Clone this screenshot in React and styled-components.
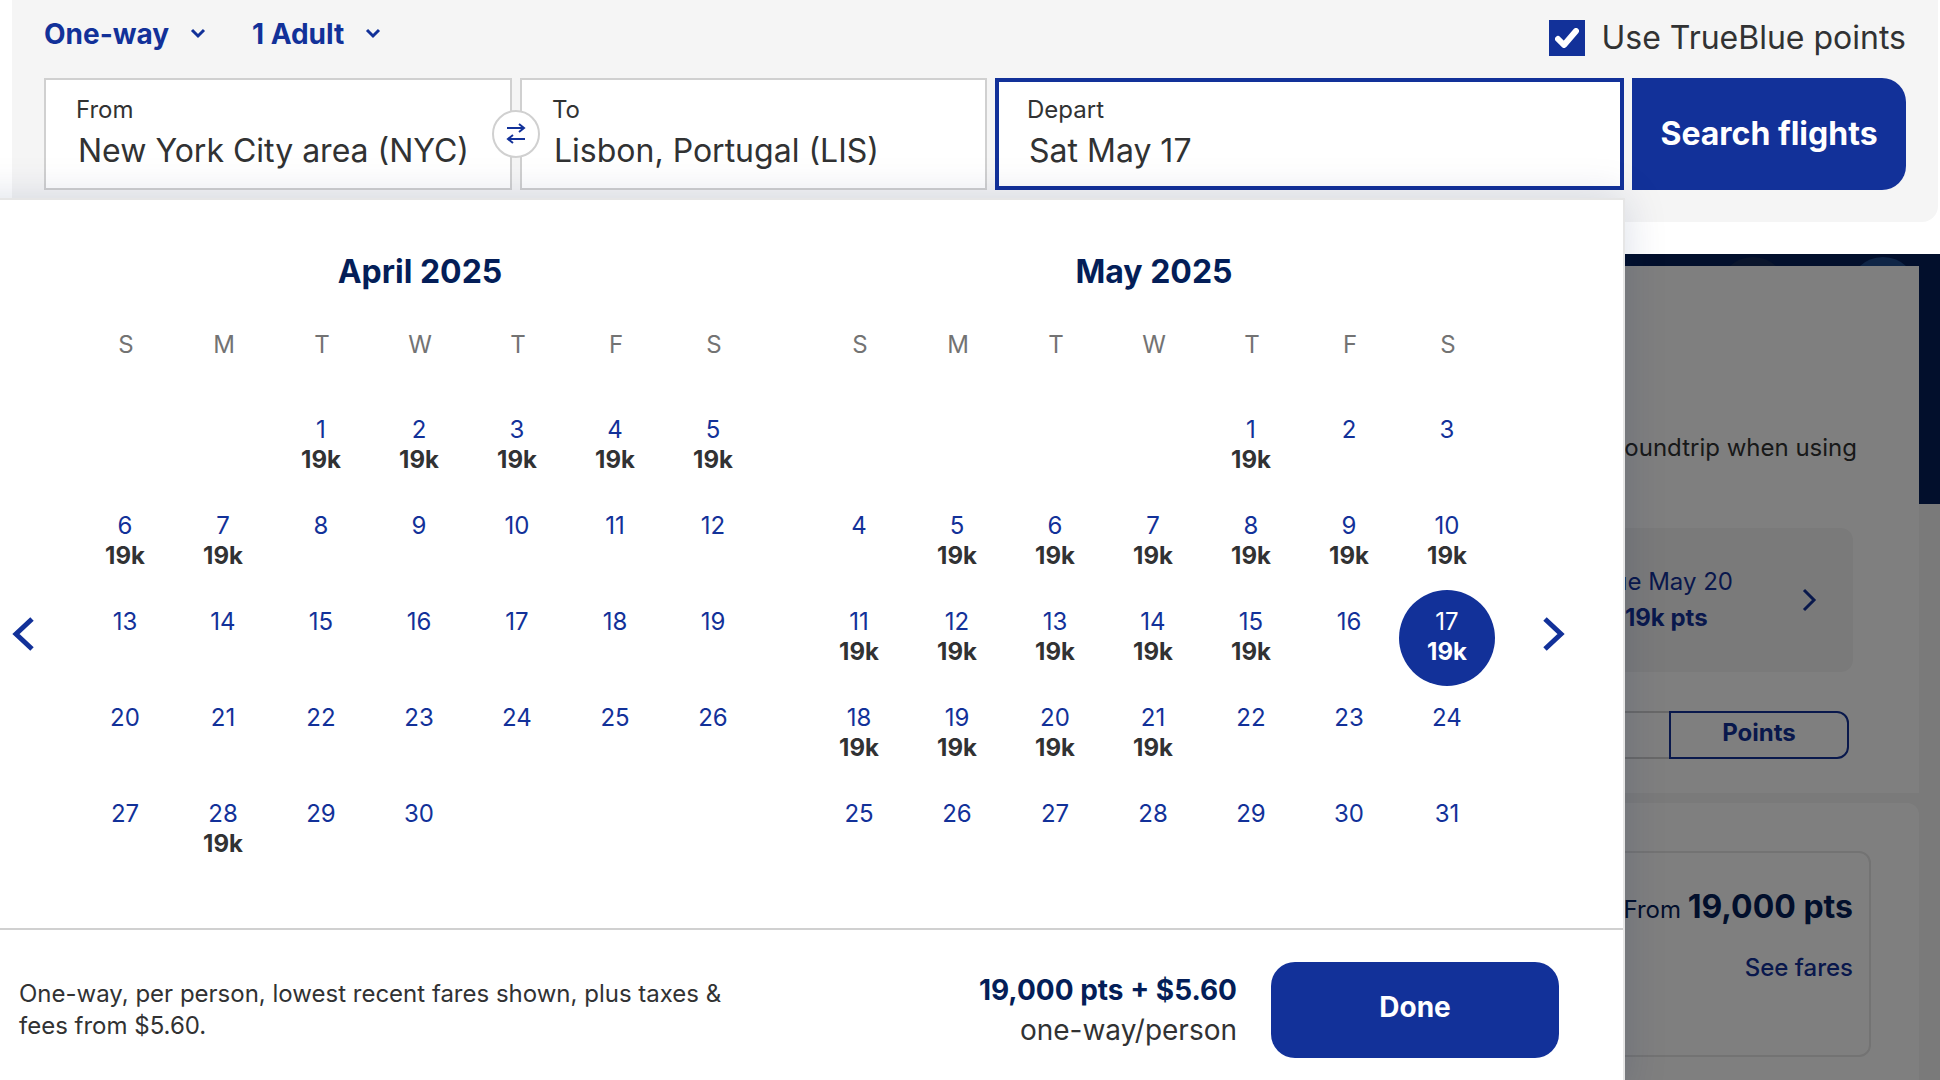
import React, { useState } from 'react';
import styled, { createGlobalStyle, css } from 'styled-components';

const blue = '#123199';
const navy = '#041e58';
const ink = '#313233';
const line = '#d0d0d0';

const GlobalStyle = createGlobalStyle`
  *,
  *::before,
  *::after {
    box-sizing: border-box;
  }

  body {
    margin: 0;
    background: #fff;
    color: ${ink};
    font-family: Inter, 'Liberation Sans', sans-serif;
    font-size: 24px;
    line-height: 32px;
  }

  button,
  input,
  select {
    font: inherit;
    color: inherit;
    border: 0;
    padding: 0;
    margin: 0;
    background: none;
  }

  button {
    cursor: pointer;
  }
`;

const Page = styled.div`
  display: flex;
  flex-direction: column;
  min-height: 100vh;
  position: relative;
  overflow: hidden;
`;

/* Search bar */

const SearchPanel = styled.form`
  position: relative;
  z-index: 2;
  margin: 0 2px 32px 12px;
  padding: 14px 32px 32px;
  background: #f5f5f5;
  border-radius: 0 0 16px 0;
`;

const Options = styled.div`
  display: flex;
  align-items: center;
  gap: 46px;
  height: 48px;
  margin-bottom: 16px;
`;

const SelectWrap = styled.label`
  display: flex;
  align-items: center;
  gap: 20px;
  height: 40px;
  margin-bottom: 8px;
  color: ${blue};
`;

const Select = styled.select`
  appearance: none;
  font-size: 28px;
  font-weight: 700;
  line-height: 40px;
`;

const PointsLabel = styled.label`
  display: flex;
  align-items: center;
  gap: 16px;
  margin-left: auto;
  font-size: 32px;
  line-height: 40px;
`;

const CheckWrap = styled.span`
  display: grid;
  width: 36px;
  height: 36px;

  & > * {
    grid-area: 1 / 1;
  }

  svg {
    place-self: center;
    pointer-events: none;
  }
`;

const Checkbox = styled.input`
  appearance: none;
  width: 36px;
  height: 36px;
  border: 2px solid ${blue};
  background: #fff;

  &:checked {
    background: ${blue};
  }
`;

const Fields = styled.div`
  display: grid;
  grid-template-columns: 468fr 467fr 629fr 274px;
  gap: 8px;
`;

const Field = styled.div`
  position: relative;
  display: flex;
  flex-direction: column;
  height: 112px;
  padding: ${props => (props.$active ? '12px 28px' : '14px 30px')};
  border: ${props => (props.$active ? `4px solid ${blue}` : `2px solid ${line}`)};
  background: #fff;
`;

const FieldLabel = styled.label`
  font-size: 24px;
  line-height: 32px;
`;

const FieldInput = styled.input`
  width: 100%;
  height: 50px;
  padding-left: 2px;
  font-size: 32px;
  line-height: 48px;
  outline: none;
`;

const SwapButton = styled.button`
  position: absolute;
  z-index: 1;
  top: 30px;
  right: -30px;
  display: grid;
  place-items: center;
  width: 48px;
  height: 48px;
  border: 2px solid ${line};
  border-radius: 50%;
  background: #fff;
`;

const PrimaryButton = styled.button`
  background: ${blue};
  color: #fff;
  font-weight: 700;
`;

const SearchButton = styled(PrimaryButton)`
  border-radius: 0 24px 24px 0;
  font-size: 32px;
`;

/* Fare calendar */

const CalendarPanel = styled.section`
  position: absolute;
  z-index: 3;
  top: 198px;
  left: -62px;
  right: 315px;
  padding-left: 60px;
  border: 2px solid #e6e6e6;
  background: #fff;
  box-shadow: 0 0 40px rgba(0, 32, 91, 0.15);
`;

const CalendarBody = styled.div`
  display: flex;
  padding: 53px 52px 50px 6px;
`;

const NavButton = styled.button`
  flex: none;
  width: 34px;
  padding-top: 144px;
`;

const Months = styled.div`
  flex: 1;
  display: flex;
  gap: 48px;
  margin: 0 40px 0 37px;
`;

const MonthTable = styled.table`
  flex: 1;
  table-layout: fixed;
  border-collapse: collapse;

  caption {
    color: ${navy};
    font-size: 32px;
    font-weight: 700;
    line-height: 38px;
  }

  th {
    height: 107px;
    padding: 0;
    color: #737373;
    font-weight: 400;
  }

  td {
    height: 96px;
    padding: 0;
  }
`;

const DayButton = styled.button`
  display: flex;
  flex-direction: column;
  align-items: center;
  width: 96px;
  height: 96px;
  padding-top: 17px;
  border-radius: 50%;
  color: ${blue};
  line-height: 30px;

  strong {
    color: ${ink};
    font-weight: 700;
  }

  ${props =>
    props.$selected &&
    css`
      background: ${blue};
      color: #fff;

      strong {
        color: #fff;
      }
    `}
`;

const CalendarFooter = styled.footer`
  display: flex;
  align-items: center;
  padding: 32px 64px 32px 19px;
  border-top: 2px solid ${line};
`;

const Note = styled.p`
  flex: 0 1 740px;
  margin: 0;
`;

const Total = styled.p`
  margin: 0 34px 0 auto;
  text-align: right;
  font-size: 28px;
  line-height: 40px;

  strong {
    display: block;
    color: ${navy};
  }
`;

const DoneButton = styled(PrimaryButton)`
  width: 288px;
  height: 96px;
  padding-bottom: 6px;
  border-radius: 24px;
  font-size: 28px;
`;

/* Results page behind the overlay */

const Results = styled.main`
  position: relative;
  flex: 1;
  display: flex;
  flex-direction: column;
  gap: 10px;
  padding: 12px 21px 0;
  background: linear-gradient(${navy} 250px, #f5f5f5 250px);

  &::after {
    content: '';
    position: absolute;
    inset: 0;
    background: rgba(0, 0, 0, 0.5);
  }
`;

const HeroDots = styled.svg`
  position: absolute;
  top: 0;
  right: 0;
`;

const Card = styled.section`
  position: relative;
  display: flex;
  flex-direction: column;
  align-items: flex-end;
  padding: ${props => (props.$rounded ? '48px' : '166px 66px 34px')};
  border-radius: ${props => (props.$rounded ? '0 12px 0 0' : '0')};
  background: #fff;
  ${props => props.$rounded && 'flex: 1;'}
`;

const Intro = styled.p`
  margin: 0 -4px 64px 0;
`;

const DateStrip = styled.div`
  display: flex;
  align-items: center;
  justify-content: flex-end;
  width: 100%;
  height: 144px;
  padding-right: 36px;
  border-radius: 12px;
  background: #f5f5f5;
  color: ${blue};
`;

const DateFare = styled.button`
  display: flex;
  flex-direction: column;
  align-items: center;
  margin-right: 68px;
  line-height: 36px;
`;

const Toggle = styled.div`
  display: flex;
  margin: 39px 4px 0 0;
`;

const ToggleButton = styled.button`
  width: 180px;
  height: 48px;
  padding-bottom: 4px;
  border: 2px solid ${props => (props.$active ? blue : line)};
  border-right-width: ${props => (props.$active ? '2px' : '0')};
  border-radius: ${props => (props.$active ? '0 12px 12px 0' : '12px 0 0 12px')};
  color: ${blue};
  font-weight: 700;
`;

const FareCard = styled.div`
  display: flex;
  flex-direction: column;
  align-items: flex-end;
  width: 100%;
  height: 206px;
  padding: 30px 16px;
  border: 2px solid #e6e6e6;
  border-radius: 12px;
`;

const FarePrice = styled.p`
  margin: 0 0 18px;
  color: ${navy};
  line-height: 48px;

  strong {
    font-size: 32px;
  }
`;

const FareLink = styled.a`
  color: ${blue};
  font-weight: 500;
  text-decoration: none;
`;

const weekdays = ['S', 'M', 'T', 'W', 'T', 'F', 'S'];

const months = [
  { name: 'April 2025', offset: 2, days: 30, fares: [1, 2, 3, 4, 5, 6, 7, 28] },
  {
    name: 'May 2025',
    offset: 4,
    days: 31,
    fares: [1, 5, 6, 7, 8, 9, 10, 11, 12, 13, 14, 15, 17, 18, 19, 20, 21],
  },
];

const getWeeks = ({ offset, days }) =>
  [0, 1, 2, 3, 4].map(week =>
    weekdays.map((_, i) => {
      const day = week * 7 + i - offset + 1;
      return day > 0 && day <= days ? day : null;
    })
  );

const SmallChevron = () => (
  <svg width="16" height="12" viewBox="0 0 16 12" fill="none" stroke="currentColor" strokeWidth="3">
    <path d="M2 2l6 6 6-6" />
  </svg>
);

const SwapIcon = () => (
  <svg width="20" height="22" viewBox="0 0 20 22" fill="none" stroke={blue} strokeWidth="2">
    <path d="M1 5h17M13 1l5 4-5 4M19 16H2M7 12l-5 4 5 4" />
  </svg>
);

const Chevron = ({ left }) => (
  <svg width="22" height="34" viewBox="0 0 22 34" fill="none" stroke={blue} strokeWidth="5">
    <path d={left ? 'M20 2L4 17l16 15' : 'M2 2l16 15L2 32'} />
  </svg>
);

const Month = ({ month, selected, onSelect }) => (
  <MonthTable>
    <caption>{month.name}</caption>
    <thead>
      <tr>
        {weekdays.map((day, i) => (
          <th key={i} scope="col">{day}</th>
        ))}
      </tr>
    </thead>
    <tbody>
      {getWeeks(month).map((week, i) => (
        <tr key={i}>
          {week.map((day, j) => (
            <td key={j}>
              {day && (
                <DayButton
                  type="button"
                  $selected={selected === `${month.name}-${day}`}
                  onClick={() => onSelect(`${month.name}-${day}`)}
                >
                  <span>{day}</span>
                  {month.fares.includes(day) && <strong>19k</strong>}
                </DayButton>
              )}
            </td>
          ))}
        </tr>
      ))}
    </tbody>
  </MonthTable>
);

const App = () => {
  const [selected, setSelected] = useState('May 2025-17');
  const [usePoints, setUsePoints] = useState(true);

  return (
    <Page>
      <GlobalStyle />
      <SearchPanel onSubmit={e => e.preventDefault()}>
        <Options>
          <SelectWrap>
            <Select aria-label="Trip type">
              <option>One-way</option>
            </Select>
            <SmallChevron />
          </SelectWrap>
          <SelectWrap>
            <Select aria-label="Travelers">
              <option>1 Adult</option>
            </Select>
            <SmallChevron />
          </SelectWrap>
          <PointsLabel>
            <CheckWrap>
              <Checkbox
                type="checkbox"
                checked={usePoints}
                onChange={e => setUsePoints(e.target.checked)}
              />
              <svg width="24" height="20" viewBox="0 0 24 20" fill="none" stroke="#fff" strokeWidth="6" strokeLinecap="round" strokeLinejoin="round">
                <path d="M3 11l6 6L21 3" />
              </svg>
            </CheckWrap>
            Use TrueBlue points
          </PointsLabel>
        </Options>
        <Fields>
          <Field>
            <FieldLabel htmlFor="from">From</FieldLabel>
            <FieldInput id="from" defaultValue="New York City area (NYC)" />
            <SwapButton type="button" aria-label="Swap cities">
              <SwapIcon />
            </SwapButton>
          </Field>
          <Field>
            <FieldLabel htmlFor="to">To</FieldLabel>
            <FieldInput id="to" defaultValue="Lisbon, Portugal (LIS)" />
          </Field>
          <Field $active>
            <FieldLabel htmlFor="depart">Depart</FieldLabel>
            <FieldInput id="depart" defaultValue="Sat May 17" />
          </Field>
          <SearchButton type="submit">Search flights</SearchButton>
        </Fields>
      </SearchPanel>

      <CalendarPanel>
        <CalendarBody>
          <NavButton type="button" aria-label="Previous month">
            <Chevron left />
          </NavButton>
          <Months>
            {months.map(month => (
              <Month key={month.name} month={month} selected={selected} onSelect={setSelected} />
            ))}
          </Months>
          <NavButton type="button" aria-label="Next month">
            <Chevron />
          </NavButton>
        </CalendarBody>
        <CalendarFooter>
          <Note>One-way, per person, lowest recent fares shown, plus taxes &amp; fees from $5.60.</Note>
          <Total>
            <strong>19,000 pts + $5.60</strong>
            one-way/person
          </Total>
          <DoneButton type="button">Done</DoneButton>
        </CalendarFooter>
      </CalendarPanel>

      <Results>
        <HeroDots width="240" height="12" viewBox="0 0 240 12">
          <circle cx="53" cy="37" r="34" fill="#142a58" />
          <circle cx="183" cy="37" r="34" fill="#1e4a8c" />
        </HeroDots>
        <Card>
          <Intro>roundtrip when using</Intro>
          <DateStrip>
            <DateFare type="button">
              <span>Tue May 20</span>
              <strong>19k pts</strong>
            </DateFare>
            <svg width="16" height="24" viewBox="0 0 16 24" fill="none" stroke={blue} strokeWidth="3">
              <path d="M3 2l10 10L3 22" />
            </svg>
          </DateStrip>
          <Toggle>
            <ToggleButton type="button" aria-label="Dollars" />
            <ToggleButton type="button" $active>Points</ToggleButton>
          </Toggle>
        </Card>
        <Card $rounded>
          <FareCard>
            <FarePrice>
              From <strong>19,000 pts</strong>
            </FarePrice>
            <FareLink href="#fares">See fares</FareLink>
          </FareCard>
        </Card>
      </Results>
    </Page>
  );
};

export default App;
